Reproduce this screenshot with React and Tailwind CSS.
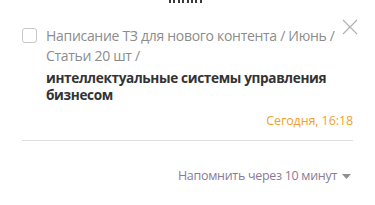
import React from "react";

const font = { fontFamily: '"Open Sans", "Noto Sans", sans-serif' };

export default function App() {
  return (
    <div className="w-[375px] h-[205px] bg-white overflow-hidden relative" style={font}>
      {/* clipped remnant of the item above */}
      <div className="absolute left-[169px] top-0 w-[35px] h-[3px] bg-[repeating-linear-gradient(90deg,#3a3a3a_0_2px,transparent_2px_4.4px)]" />

      <div className="pl-[22px] pr-[22px] pt-[26px]">
        <div className="flex items-start relative">
          <div className="mt-[2px] w-[15px] h-[15px] shrink-0 rounded-[3px] border border-[#c8c8c8] bg-white" />
          <div className="ml-[9px] w-[292px]">
            <p className="text-[14px] leading-[20px] tracking-[-0.3px] text-[#8c8c8c]">
              Написание ТЗ для нового контента / Июнь / Статьи 20 шт /
            </p>
            <p className="text-[13.6px] leading-[17px] font-bold tracking-[-0.35px] text-[#333] mt-[3px]">
              интеллектуальные системы управления бизнесом
            </p>
          </div>
          <button className="absolute right-[-5px] top-[-7px] w-[16px] h-[16px] text-[#b0b0b0]">
            <svg viewBox="0 0 16 16" width="16" height="16" fill="none" stroke="currentColor" strokeWidth="1.1">
              <path d="M1 1 L15 15 M15 1 L1 15" />
            </svg>
          </button>
        </div>

        <div className="flex justify-end mt-[9px]">
          <span className="text-[12.5px] leading-[18px] tracking-[-0.1px] text-[#f0a12e]">Сегодня, 16:18</span>
        </div>

        <div className="mt-[10px] h-px bg-[#dedede]" />

        <div className="flex justify-end items-center mt-[26px] pr-[2px]">
          <span className="text-[12.5px] leading-[18px] tracking-[-0.3px] text-[#8a7b98]">Напомнить через 10 минут</span>
          <svg className="ml-[5px]" width="9" height="5" viewBox="0 0 9 5">
            <path d="M0 0 L9 0 L4.5 5 Z" fill="#8f8f8f" />
          </svg>
        </div>
      </div>
    </div>
  );
}
